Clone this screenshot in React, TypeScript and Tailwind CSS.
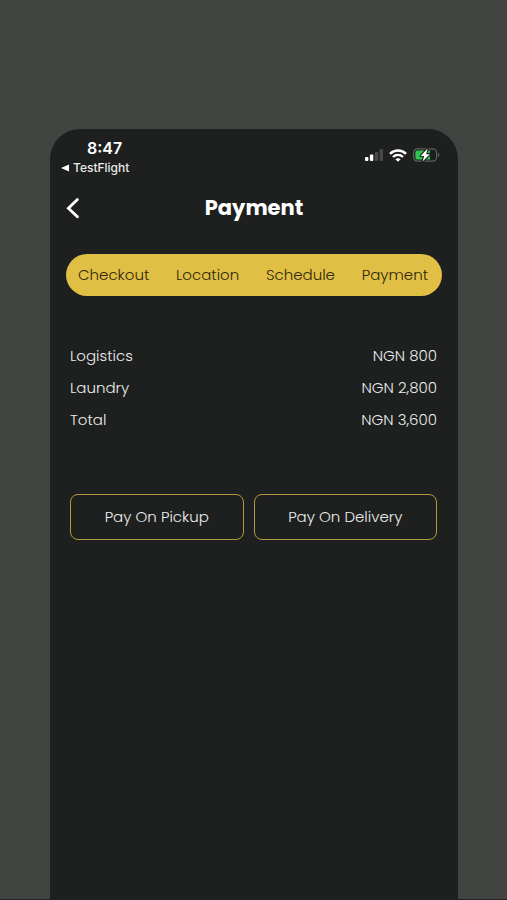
const steps = ["Checkout", "Location", "Schedule", "Payment"]

const charges = [
  { label: "Logistics", amount: "NGN 800" },
  { label: "Laundry", amount: "NGN 2,800" },
  { label: "Total", amount: "NGN 3,600" },
]

const payOptions = ["Pay On Pickup", "Pay On Delivery"]

function SignalIcon() {
  return (
    <svg width="18" height="12" viewBox="0 0 18 12" aria-hidden="true">
      <rect x="0" y="8" width="3.4" height="4" rx="1" fill="#fff" />
      <rect x="4.9" y="5.6" width="3.4" height="6.4" rx="1" fill="#fff" />
      <rect x="9.8" y="3" width="3.4" height="9" rx="1" fill="#484a49" />
      <rect x="14.6" y="0" width="3.4" height="12" rx="1" fill="#484a49" />
    </svg>
  )
}

function WifiIcon() {
  return (
    <svg width="18" height="13" viewBox="0 0 18 13" fill="none" stroke="#fff" strokeWidth="2.4" aria-hidden="true">
      <path d="M1 4.8C5.4 .3 12.6 .3 17 4.8" />
      <path d="M4 8C6.8 5.2 11.2 5.2 14 8" />
      <path d="M9 12.8L6.4 10.2C7.8 8.8 10.2 8.8 11.6 10.2Z" fill="#fff" stroke="none" />
    </svg>
  )
}

function BatteryIcon() {
  return (
    <svg width="27" height="14" viewBox="0 0 27 14" aria-hidden="true">
      <rect x=".6" y=".9" width="23" height="12.2" rx="3.8" fill="none" stroke="#5d605e" strokeWidth="1.2" />
      <path d="M25 4.8C26.7 5.4 26.7 8.6 25 9.2Z" fill="#5d605e" />
      <path d="M4.6 2.4H17V11.6H4.6A2.2 2.2 0 0 1 2.4 9.4V4.6A2.2 2.2 0 0 1 4.6 2.4Z" fill="#30c552" />
      <path
        d="M14.6 .4L7.6 7.9H11.2L9.6 13.6L16.8 6.2H13.2Z"
        fill="#fff"
        stroke="#1e201f"
        strokeWidth="2.2"
        strokeLinejoin="round"
        paintOrder="stroke"
      />
    </svg>
  )
}

function StatusBar() {
  return (
    <div className="flex items-start justify-between pt-[9px] pr-[18px] pl-[11px] font-['Inter',sans-serif] text-white">
      <div>
        <div className="pl-[26px] text-base leading-5 font-semibold">8:47</div>
        <a href="#testflight" className="flex items-center gap-1 text-xs leading-5 font-medium text-[#e8e9e8]">
          <svg width="8" height="8" viewBox="0 0 8 8" aria-hidden="true">
            <path d="M0 4L8 .4V7.6Z" fill="#fff" />
          </svg>
          TestFlight
        </a>
      </div>
      <div className="flex items-center gap-1.5 pt-2.5">
        <SignalIcon />
        <WifiIcon />
        <BatteryIcon />
      </div>
    </div>
  )
}

export default function App() {
  return (
    <div className="flex min-h-screen flex-col border-b border-[#2a1f24] bg-[#424442] pt-[129px] pr-[49px] pl-[50px] font-['Poppins','Inter',sans-serif]">
      <main className="flex-1 rounded-t-[30px] bg-[#1e201f]">
        <StatusBar />

        {/* Header */}
        <header className="grid grid-cols-[1fr_auto_1fr] items-center px-4 pt-3.5">
          <button type="button" aria-label="Back" className="w-5">
            <svg width="14" height="21" viewBox="0 0 14 21" fill="none" aria-hidden="true">
              <path d="M11.4 1.6L2.4 10.2L11.4 18.8" stroke="#fff" strokeWidth="2.8" strokeLinecap="round" />
            </svg>
          </button>
          <h1 className="text-[21px] leading-8 font-bold text-white">Payment</h1>
        </header>

        {/* Steps */}
        <ol className="mx-4 mt-[30px] flex h-[42px] items-center justify-between rounded-full bg-[#e1bf44] pr-3.5 pl-3 text-[15px] font-light text-[#2e270a]">
          {steps.map((step) => (
            <li key={step}>{step}</li>
          ))}
        </ol>

        {/* Charges */}
        <dl className="mr-[21px] ml-5 mt-11 text-[15px] font-light text-[#ecedec]">
          {charges.map(({ label, amount }) => (
            <div key={label} className="flex h-8 items-center justify-between">
              <dt>{label}</dt>
              <dd>{amount}</dd>
            </div>
          ))}
        </dl>

        {/* Pay options */}
        <div className="mr-[21px] ml-5 mt-[58px] flex gap-2.5">
          {payOptions.map((option) => (
            <button
              key={option}
              type="button"
              className="h-[46px] flex-auto rounded-lg border border-[#b39a3c] text-[15px] font-light whitespace-nowrap text-[#ecedec]"
            >
              {option}
            </button>
          ))}
        </div>
      </main>
    </div>
  )
}
